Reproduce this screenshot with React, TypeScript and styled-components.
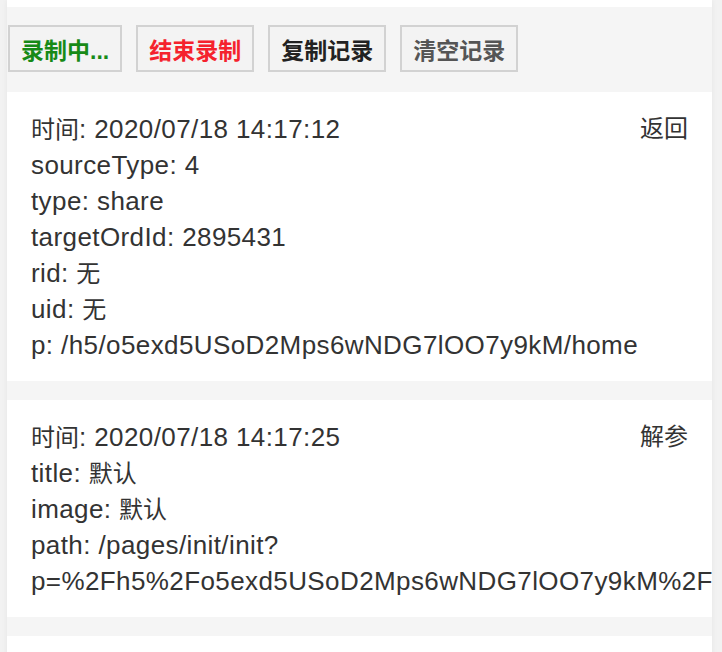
import React from 'react';
import styled, { createGlobalStyle } from 'styled-components';

const GlobalStyle = createGlobalStyle`
  html, body {
    margin: 0;
    padding: 0;
    background: #f2f2f2;
  }
  body {
    font-family: "Liberation Sans", "Noto Sans CJK SC", sans-serif;
    color: #333;
  }
`;

const Page = styled.div`
  width: 705px;
  margin-left: 7px;
  min-height: 652px;
  background: #f5f5f5;
  box-shadow: 0 0 6px rgba(0, 0, 0, 0.06);
  border-top: 7px solid #fff;
`;

const Toolbar = styled.div`
  display: flex;
  align-items: center;
  gap: 14px;
  padding: 18px 0 20px 1px;
`;

const ToolButton = styled.button<{ tone: string }>`
  height: 47px;
  padding: 0 11px;
  border: 2px solid #d2d2d2;
  background: #f3f3f3;
  color: ${props => props.tone};
  font-family: "Liberation Sans", "Noto Sans CJK SC", sans-serif;
  font-size: 23px;
  font-weight: 600;
  cursor: pointer;
`;

const List = styled.div`
  display: flex;
  flex-direction: column;
  gap: 19px;
`;

const Card = styled.div`
  background: #fff;
  padding: 19px 24px 18px;
  overflow: hidden;
  font-size: 26px;
  letter-spacing: 0.4px;
  line-height: 36px;
  color: #333;
`;

const HeadRow = styled.div`
  display: flex;
  justify-content: space-between;
  height: 36px;
`;

const Line = styled.div`
  height: 36px;
  white-space: nowrap;
`;

const Han = styled.span`
  font-size: 24px;
  line-height: 1;
  letter-spacing: 0;
`;

const Action = styled(Han)`
  line-height: 36px;
  color: #333;
  cursor: pointer;
`;

// wrap the Chinese runs so they keep the smaller size
const Text: React.FC<{ value: string }> = ({ value }) => (
  <>
    {value.split(/([\u4e00-\u9fff]+)/).map((part, i) =>
      /[\u4e00-\u9fff]/.test(part) ? <Han key={i}>{part}</Han> : part
    )}
  </>
);

type Record = {
  time: string;
  action: string;
  lines: string[];
};

const records: Record[] = [
  {
    time: '2020/07/18 14:17:12',
    action: '返回',
    lines: [
      'sourceType: 4',
      'type: share',
      'targetOrdId: 2895431',
      'rid: 无',
      'uid: 无',
      'p: /h5/o5exd5USoD2Mps6wNDG7lOO7y9kM/home',
    ],
  },
  {
    time: '2020/07/18 14:17:25',
    action: '解参',
    lines: [
      'title: 默认',
      'image: 默认',
      'path: /pages/init/init?',
      'p=%2Fh5%2Fo5exd5USoD2Mps6wNDG7lOO7y9kM%2Fhome',
    ],
  },
];

const buttons = [
  { text: '录制中...', tone: '#178a17' },
  { text: '结束录制', tone: '#f5222d' },
  { text: '复制记录', tone: '#222' },
  { text: '清空记录', tone: '#555' },
];

export default function App() {
  return (
    <>
      <GlobalStyle />
      <Page>
        <Toolbar>
          {buttons.map(b => (
            <ToolButton key={b.text} tone={b.tone}>
              {b.text}
            </ToolButton>
          ))}
        </Toolbar>
        <List>
          {records.map(r => (
            <Card key={r.time}>
              <HeadRow>
                <span>
                  <Text value={`时间: ${r.time}`} />
                </span>
                <Action>{r.action}</Action>
              </HeadRow>
              {r.lines.map(l => (
                <Line key={l}>
                  <Text value={l} />
                </Line>
              ))}
            </Card>
          ))}
          <Card />
        </List>
      </Page>
    </>
  );
}
